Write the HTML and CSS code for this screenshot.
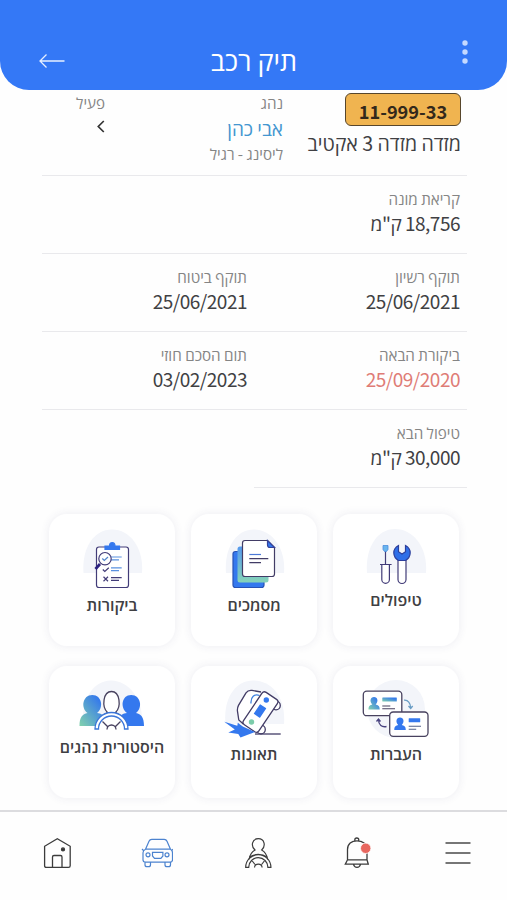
FILE: index.html
```html
<!DOCTYPE html>
<html lang="he" dir="rtl">
<head>
    <meta charset="UTF-8">
    <meta name="viewport" content="width=device-width, initial-scale=1.0">
    <title>תיק רכב</title>
    <link rel="stylesheet" href="styles.css">
</head>
<body>
    <div class="app">
        <header class="header">
            <svg class="header-dots" width="8" height="26" viewBox="0 0 8 26" fill="#c5d9ff">
                <circle cx="4" cy="4" r="2.7"/>
                <circle cx="4" cy="13" r="2.7"/>
                <circle cx="4" cy="22" r="2.7"/>
            </svg>
            <h1>תיק רכב</h1>
            <svg class="header-back" width="26" height="16" viewBox="0 0 26 16" fill="none" stroke="#e6efff" stroke-width="1.3">
                <path d="M25.5 8H1M7.5 1.5L1 8l6.5 6.5"/>
            </svg>
        </header>

        <main class="content">
            <section class="summary">
                <div class="car">
                    <div class="plate">11-999-33</div>
                    <div class="model">מזדה מזדה 3 אקטיב</div>
                </div>
                <div class="driver">
                    <div class="label">נהג</div>
                    <a class="driver-name">אבי כהן</a>
                    <div class="label lease">ליסינג - רגיל</div>
                </div>
                <div class="status">
                    <div class="label">פעיל</div>
                    <svg width="8" height="13" viewBox="0 0 8 13" fill="none" stroke="#333" stroke-width="1.7">
                        <path d="M6.8 1L1.3 6.5l5.5 5.5"/>
                    </svg>
                </div>
            </section>

            <section class="details">
                <div class="item wide">
                    <div class="label">קריאת מונה</div>
                    <div class="value">18,756 ק"מ</div>
                </div>
                <div class="item">
                    <div class="label">תוקף רשיון</div>
                    <div class="value">25/06/2021</div>
                </div>
                <div class="item">
                    <div class="label">תוקף ביטוח</div>
                    <div class="value">25/06/2021</div>
                </div>
                <div class="item">
                    <div class="label">ביקורת הבאה</div>
                    <div class="value late">25/09/2020</div>
                </div>
                <div class="item">
                    <div class="label">תום הסכם חוזי</div>
                    <div class="value">03/02/2023</div>
                </div>
                <div class="item">
                    <div class="label">טיפול הבא</div>
                    <div class="value">30,000 ק"מ</div>
                </div>
            </section>

            <section class="tiles">
                <a class="tile">
                    <svg width="126" height="73" viewBox="0 0 126 73" fill="none" stroke="#423c78" stroke-width="1.2">
                        <path class="blob" d="M34 59C32 34 44 15 62 15s33 18 31 44z"/>
                        <path d="M52.5 36v14.5M47 50.5h11.600M48.800 50.500v15a3.800 3.800 0 0 0 7.600 0v-15z" fill="#fff"/>
                        <path d="M50 31.500h5v4l-1.500 2h-2l-1.500-2z" fill="#69b5ee" stroke="#4b8dde" stroke-width=".8"/>
                        <path d="M65 45v20.500a4 4 0 0 0 8 0V45z" fill="#fff"/>
                        <path d="M65.500 31.500v6.200l3.500 2.300 3.500-2.300v-6.200c6.500 3.500 6 11.500 0 15h-7c-6-3.500-6.500-11.500 0-15z" fill="#2f6fe8" stroke="#2c3f9c"/>
                    </svg>
                    <span>טיפולים</span>
                </a>
                <a class="tile">
                    <svg width="126" height="78" viewBox="0 0 126 78" fill="none" stroke-width="1.2">
                        <defs>
                            <linearGradient id="paper" x1="0" y1="0" x2="0" y2="1">
                                <stop offset="0" stop-color="#5599ee"/>
                                <stop offset="1" stop-color="#86d4b8"/>
                            </linearGradient>
                        </defs>
                        <path class="blob" d="M35 59C33 34 45 15.500 63 15.500S95 34 93 59z"/>
                        <rect x="42" y="37.500" width="31" height="36" rx="2.500" fill="#3478ee" stroke="#2853b5"/>
                        <rect x="46.500" y="32.500" width="31" height="36" rx="2.500" fill="url(#paper)"/>
                        <path d="M54 26.500h22.500l7 7V60a2.500 2.500 0 0 1-2.500 2.500H54a2.500 2.500 0 0 1-2.500-2.500V29a2.500 2.500 0 0 1 2.500-2.500z" fill="#fff" stroke="#423c66"/>
                        <path d="M76.500 26.500v4.500a2.500 2.500 0 0 0 2.500 2.500h4.500z" fill="#3478ee" stroke="#34419a"/>
                        <path d="M58.300 40.500H70" stroke="#4c79d8"/>
                        <path d="M58.300 44.600h19M58.300 48.600H70" stroke="#423c66"/>
                    </svg>
                    <span>מסמכים</span>
                </a>
                <a class="tile">
                    <svg width="126" height="78" viewBox="0 0 126 78" fill="none" stroke="#423c78" stroke-width="1.2">
                        <path class="blob" d="M34.500 59C32.500 34 45 15.500 63 15.500S95 34 93 59z"/>
                        <rect x="47.500" y="33" width="32" height="40.500" rx="2.500" fill="#fff"/>
                        <path d="M56 35.500V32h4.500c0-4.500 5.500-4.500 5.500 0h4.500v3.500z" fill="#3478ee" stroke="#3478ee"/>
                        <path d="M62 43h10.700M62 45.800h8M62 53.800h10.700M62 56.600h8" stroke="#5a91e0"/>
                        <path d="M62 63.700h10.700M62 66.400h8"/>
                        <path d="M53.800 55.500l2 2 4-3.800M54.500 62.800l4.500 4.400M59 62.800l-4.500 4.400"/>
                        <circle cx="56" cy="44.700" r="6.200" fill="#fff"/>
                        <path d="M53.300 44.500l2 2 3.700-3.500" stroke="#5285c9"/>
                        <path d="M51 50l-4.500 5" stroke="#2b2180" stroke-width="2.800"/>
                    </svg>
                    <span>ביקורות</span>
                </a>
                <a class="tile">
                    <svg width="126" height="75" viewBox="0 0 126 75" fill="none" stroke="#48425f" stroke-width="1.3">
                        <defs>
                            <linearGradient id="mint" x1="0" y1="1" x2="1" y2="0">
                                <stop offset="0" stop-color="#82d2ad"/>
                                <stop offset=".8" stop-color="#367bea"/>
                            </linearGradient>
                        </defs>
                        <circle class="blob" cx="63" cy="43" r="29"/>
                        <rect x="30.300" y="25.200" width="38.500" height="24.500" rx="3.500" fill="#fff"/>
                        <g stroke="none" fill="url(#mint)">
                            <path d="M35.500 43.500c0-4 2-4.500 3.800-5-3-3-2-7.500 1.700-7.500s4.700 4.500 1.700 7.500c1.800.5 4 1 4 5z"/>
                            <rect x="49.300" y="31.600" width="14.500" height="4" rx=".5"/>
                        </g>
                        <path d="M49.300 40h8M49.300 42.700H62" stroke-width="1.1"/>
                        <path d="M71 34.200c4-.5 6.500 3 6.700 7.500M75.500 40l2.200 2.500 2-2.500" stroke="#6a9dc4"/>
                        <path d="M53.500 60.500c-4.500 1-8-1.500-8-7M43.500 55.500l2-2.500 2 2.500" stroke="#48427f"/>
                        <rect x="56.700" y="46" width="38.300" height="24.300" rx="3.500" fill="#fff"/>
                        <g stroke="none" fill="#3478ee">
                            <path d="M61.300 64c0-4 2-4.500 3.900-5-3-3-2-7.500 1.800-7.500s4.800 4.500 1.800 7.500c1.800.5 4 1 4 5z"/>
                            <rect x="75.700" y="52.200" width="11.500" height="4" rx=".5"/>
                        </g>
                        <path d="M75.700 60.300H88M75.700 63.200h7.500" stroke="#50608a" stroke-width="1.1"/>
                    </svg>
                    <span>העברות</span>
                </a>
                <a class="tile">
                    <svg width="126" height="75" viewBox="0 0 126 75" fill="none" stroke="#423c66" stroke-width="1.3">
                        <path class="blob" d="M34.500 58C32 33 44 14.500 62 14.500S95 30 93 58z"/>
                        <path d="M70 26l-9-1.600q-4-.5-6 2.500l-7.500 12.500q-1.500 3-1 6l1.300 8.600 4.500 4" fill="#fff"/>
                        <path d="M68.500 29.500c-5-2-9 1.500-8.500 8" stroke="#3c80df"/>
                        <circle cx="85" cy="39.500" r="4.300" fill="#fff"/>
                        <circle cx="70" cy="63.500" r="4.300" fill="#fff"/>
                        <rect x="60.200" y="26.500" width="18.500" height="39" rx="3" transform="rotate(34 69.400 46)" fill="#fff"/>
                        <rect x="65.300" y="39.300" width="7.500" height="11.500" rx=".5" transform="rotate(34 69 45)" fill="#3478ee" stroke="none"/>
                        <circle cx="75.300" cy="34" r="2.700" fill="#3478ee" stroke="none"/>
                        <circle cx="60.500" cy="56" r="2.700" fill="#7bccaa" stroke="none"/>
                        <path d="M64 68h25.700"/>
                        <path d="M33.300 55.700l13 4.100.5-3 5 3.700 12.200 5.500-14.500 5.500-2.200-3.500-10-1.500 6.500-3z" fill="#3478ee" stroke="none"/>
                    </svg>
                    <span>תאונות</span>
                </a>
                <a class="tile">
                    <svg width="126" height="68" viewBox="0 0 126 68" fill="none" stroke="#48425f" stroke-width="1.3">
                        <path class="blob" d="M34 59C32 34 44 14.500 62 14.500S95 34 93 59z"/>
                        <path d="M30.500 60c0-9 3-12 8-13-7-5-5-18 4.800-18S55 42 48 47c4 .5 7 2 8 6l-5 7z" fill="url(#mint)" stroke="none"/>
                        <path d="M95 60c0-9-3-12-8-13 7-5 5-18-4.800-18S71 42 78 47c-4 .5-7 2-8 6l5 7z" fill="#3478ee" stroke="none"/>
                        <path d="M49 60c1-7 4-11 9.500-13.500-6-5.500-4.500-21 4-21s10 15.500 4 21C72 49 75 53 76 60" fill="#fff"/>
                        <path d="M46 63a16.500 16.500 0 0 1 33 0h-3.500a13 13 0 0 0-26 0z" fill="#fff" stroke="#3b75d8"/>
                        <path d="M58 63.500a4.500 4.500 0 0 1 9 0M58.500 60.500l-5-5M66.500 60.500l5-5"/>
                    </svg>
                    <span>היסטורית נהגים</span>
                </a>
            </section>
        </main>

        <nav class="navbar">
            <a>
                <svg width="32" height="32" viewBox="0 0 32 32" fill="none" stroke="#4a4a4a" stroke-width="1.3">
                    <path d="M3.500 6h25M3.500 16h25M3.500 26h25"/>
                </svg>
            </a>
            <a>
                <svg width="32" height="32" viewBox="0 0 32 32" fill="none" stroke="#3c3c3c" stroke-width="1.3">
                    <path d="M5.500 23V12.500C5.500 7 9.500 3.800 15 3.800S25 7 25 12.500V23M12.800 4V3a2 2 0 0 1 4 0v1M5.500 22.800H25l1.300 4.400H3.300zM11.500 27.300c1 4 6 4 7 0"/>
                    <circle cx="23.700" cy="11.300" r="5.200" fill="#e8675f" stroke="#fff" stroke-width=".8"/>
                </svg>
            </a>
            <a>
                <svg width="32" height="32" viewBox="0 0 32 32" fill="none" stroke="#3c3c3c" stroke-width="1.2">
                    <path d="M7 22.500c.8-5 2.500-7.500 6-9.500C8.500 9 10 1.700 16.300 1.700S24 9 19.700 13c3.500 2 5.200 4.500 6 9.500"/>
                    <path d="M3.700 30.300a12.600 12.600 0 0 1 25.200 0h-3a9.600 9.600 0 0 0-19.200 0zM7.500 20c5-3.500 12.500-3.500 17.500 0M12.500 30.500c.3-4.500 7.300-4.500 7.600 0M13 27.500L9.500 23M19.600 27.500l3.500-4.500"/>
                </svg>
            </a>
            <a>
                <svg width="32" height="32" viewBox="0 0 32 32" fill="none" stroke="#4c83cf" stroke-width="1.2">
                    <path d="M4.500 12.200L8 4.200q.8-1.900 2.800-1.900h12.400q2 0 2.800 1.900l3.500 8M4.500 12.200h25q2 1.200 2 3.500v7q0 2.500-2.500 2.500H4.500Q2 25.200 2 22.700v-7q0-2.300 2.500-3.500zM2.500 13.500L1 12M31 13.500l1-1.500M4 25.200v2.500q0 2 2 2h1.500q2 0 2-2v-2.500M24 25.200v2.500q0 2 2 2h1.500q2 0 2-2v-2.500"/>
                    <circle cx="7" cy="17.800" r="2"/>
                    <circle cx="26" cy="17.800" r="2"/>
                    <path d="M11.500 15.300h10.400v3.700l-2 2.300h-6.400l-2-2.300z"/>
                </svg>
            </a>
            <a>
                <svg width="32" height="32" viewBox="0 0 32 32" fill="none" stroke="#3c3c3c" stroke-width="1.3">
                    <path d="M3.600 28.700V9.300L16.300 1.800l12.900 7.500v19.400q0 1.700-1.700 1.700H5.300q-1.700 0-1.700-1.700zM11.500 30.300V20q0-1.500 1.500-1.500h6.500Q21 18.500 21 20v10.300"/>
                    <circle cx="22" cy="12.400" r="1.500" fill="#333"/>
                </svg>
            </a>
        </nav>
    </div>
</body>
</html>
```
FILE: styles.css
```css
* {
    box-sizing: border-box;
}
body {
    margin: 0;
    background: #fefefe;
    font-family: "Noto Sans CJK SC", "Open Sans", "Liberation Sans", sans-serif;
    color: #404043;
}
.app {
    width: 507px;
    height: 900px;
    display: flex;
    flex-direction: column;
    overflow: hidden;
}
.header {
    height: 90px;
    flex-shrink: 0;
    padding: 34px 38px 0 39px;
    display: grid;
    grid-template-columns: 26px 1fr 26px;
    background: #3478f6;
    border-radius: 0 0 29px 29px;
}
.header h1 {
    margin: 9px 0 0;
    font-size: 27px;
    line-height: 34px;
    font-weight: 500;
    text-align: center;
    color: #fff;
}
.header-dots {
    margin-top: 5px;
}
.header-back {
    margin-top: 19px;
}
.content {
    flex: 1;
    padding: 0 40px 0 42px;
}
.summary {
    height: 86px;
    padding: 3px 6px 0 7px;
    display: grid;
    grid-template-columns: 178px 178px 1fr;
    border-bottom: 1px solid #e9e9ec;
}
.plate {
    width: 116px;
    height: 33px;
    border: 1.5px solid #57462c;
    border-radius: 6px;
    background: #f0b450;
    color: #33291b;
    font-size: 18.2px;
    font-weight: 700;
    line-height: 34px;
    text-align: center;
    direction: ltr;
}
.model {
    margin-top: 4px;
    font-size: 19.6px;
    line-height: 26px;
    white-space: nowrap;
}
.label {
    font-size: 15.2px;
    line-height: 18px;
    color: #858585;
    white-space: nowrap;
}
.driver-name {
    display: block;
    margin-top: 4px;
    font-size: 19px;
    line-height: 26px;
    color: #4496d0;
}
.lease {
    margin-top: 3px;
}
.status svg {
    display: block;
    margin-top: 9px;
}
.details {
    display: grid;
    grid-template-columns: 213px 212px;
}
.item {
    height: 78px;
    padding: 13px 7px 0;
    border-bottom: 1px solid #e9e9ec;
}
.wide {
    grid-column: span 2;
}
.value {
    margin-top: 3px;
    font-size: 19px;
    line-height: 26px;
    letter-spacing: -0.5px;
}
.late {
    color: #df7c76;
}
.tiles {
    margin-top: 26px;
    padding: 0 8px 0 7px;
    display: grid;
    grid-template-columns: repeat(3, 126px);
    gap: 20px 16px;
}
.tile {
    height: 132px;
    display: flex;
    flex-direction: column;
    align-items: center;
    border-radius: 18px;
    background: #fff;
    box-shadow: 0 0 10px rgba(60, 60, 110, 0.09);
}
.tile svg {
    flex-shrink: 0;
}
.tile span {
    font-size: 16px;
    line-height: 24px;
    font-weight: 600;
    white-space: nowrap;
}
.blob {
    fill: #f3f5fa;
    stroke: none;
}
.navbar {
    height: 90px;
    flex-shrink: 0;
    margin-right: -1px;
    padding: 25px 0 0 7px;
    display: grid;
    grid-template-columns: repeat(5, 1fr);
    justify-items: center;
    background: #fefefe;
    border-top: 2px solid #dcdcdf;
}
```
